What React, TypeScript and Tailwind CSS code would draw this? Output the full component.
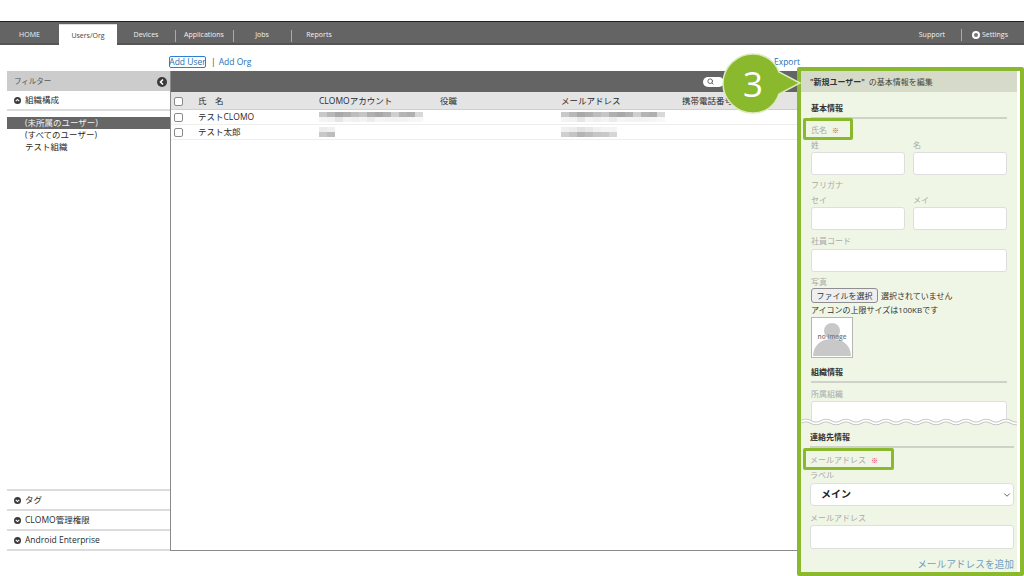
import { ChevronDown, Search } from 'lucide-react'

const font = { fontFamily: '"Open Sans", "Noto Sans CJK JP", sans-serif' }

const leftTabs = [
  { name: 'HOME', w: 'w-[59px]' },
  { name: 'Users/Org', w: 'w-[58px]', active: true },
  { name: 'Devices', w: 'w-[58px]' },
  { name: 'Applications', w: 'w-[58px]', sep: true },
  { name: 'Jobs', w: 'w-[58px]', sep: true },
  { name: 'Reports', w: 'w-[56px]', sep: true },
]

const columns = ['CLOMOアカウント', '役職', 'メールアドレス', '携帯電話番号']

// blurred-out personal data, one grey per mosaic cell
const mosaicLong = [
  ['#c9c9c9', '#b8b8b8', '#a9a9a9', '#b0b0b0', '#bdbdbd', '#c6c6c6', '#b0b0b0', '#a8a8a8', '#b2b2b2', '#cfcfcf', '#b5b5b5', '#b0b0b0', '#d8d8d8'],
  ['#f4f4f4', '#f2f2f2', '#e6e6e6', '#f4f4f4', '#f0f0f0', '#f4f4f4', '#ececec', '#f6f6f6', '#f4f4f4', '#f2f2f2', '#f4f4f4', '#f6f6f6', '#f8f8f8'],
]
const mosaicShort = [
  ['#ececec', '#f0f0f0'],
  ['#c8c8c8', '#bdbdbd'],
]
const mosaicMid = [
  ['#f0f0f0', '#ececec', '#e2e2e2', '#e8e8e8', '#f0f0f0', '#f4f4f4', '#f4f4f4'],
  ['#cfcfcf', '#c4c4c4', '#b4b4b4', '#bcbcbc', '#c6c6c6', '#c8c8c8', '#d6d6d6'],
]

function Arrow({ dir }: { dir: 'up' | 'down' | 'left' }) {
  const d = dir === 'up' ? 'M2.5 6 L5 3.5 L7.5 6' : dir === 'down' ? 'M2.5 4 L5 6.5 L7.5 4' : 'M6 2.5 L3.5 5 L6 7.5'
  return (
    <svg viewBox="0 0 10 10" className="w-full h-full">
      <circle cx="5" cy="5" r="5" fill="#3a3a3a" />
      <path d={d} fill="none" stroke="#fff" strokeWidth="1.6" />
    </svg>
  )
}

function Accordion({ label, dir }: { label: string; dir: 'up' | 'down' }) {
  return (
    <div className="h-[20px] flex items-center pl-[7px] gap-[4px] text-[8.5px] text-[#2a2a2a] bg-white border-b-2 border-[#dcdcdc]">
      <span className="w-[7px] h-[7px] flex">
        <Arrow dir={dir} />
      </span>
      {label}
    </div>
  )
}

function Mosaic({ rows }: { rows: string[][] }) {
  return (
    <div className="flex flex-col blur-[0.7px]">
      {rows.map((cells, i) => (
        <div key={i} className="flex h-[5px]">
          {cells.map((c, j) => (
            <div key={j} className="w-[8px] h-full" style={{ background: c }} />
          ))}
        </div>
      ))}
    </div>
  )
}

function Row({ name, a, b }: { name: string; a: string[][]; b: string[][] }) {
  return (
    <div className="h-[15px] grid grid-cols-[148px_121px_121px_121px_1fr] items-center border-b border-[#eeeeee] text-[8.5px] text-[#2a2a2a]">
      <div className="flex items-center">
        <span className="ml-[3px] w-[9px] h-[9px] border border-[#8a8a8a] rounded-[2px] bg-white" />
        <span className="ml-[15px]">{name}</span>
      </div>
      <Mosaic rows={a} />
      <div />
      <Mosaic rows={b} />
      <div />
    </div>
  )
}

function Label({ children }: { children: React.ReactNode }) {
  return <div className="text-[8px] leading-[12px] text-[#aaa]">{children}</div>
}

function Field({ className = '' }: { className?: string }) {
  return <div className={`h-[23px] bg-white border border-[#dedede] rounded-[3px] ${className}`} />
}

function Heading({ children }: { children: React.ReactNode }) {
  return <div className="text-[8px] leading-[12px] font-semibold text-[#333] border-b-2 border-[#cfd2c8] pb-[3px]">{children}</div>
}

function Required() {
  return <span className="ml-[5px] text-[7px] font-bold text-[#e8344a]">※</span>
}

function NameRow({ left, right }: { left: string; right: string }) {
  return (
    <div className="grid grid-cols-[94px_94px] gap-x-[8px]">
      <Label>{left}</Label>
      <Label>{right}</Label>
      <Field className="mt-[1px]" />
      <Field className="mt-[1px]" />
    </div>
  )
}

function Panel() {
  return (
    <div className="absolute left-[797px] top-[67px] w-[227px] h-[509px] border-4 border-[#8ab92d] rounded-[2px] bg-white pr-[3px]">
      <div className="h-full bg-[#eff6e5] relative overflow-hidden">
        <div className="h-[21px] bg-[#d5dbc8] flex items-center pl-[9px] text-[8px] text-[#444]">
          <b className="font-semibold text-[#333]">"新規ユーザー"</b>
          <span className="ml-[4px]">の基本情報を編集</span>
        </div>
        <div className="h-[329px] overflow-hidden pl-[10px] pr-[10px]">
          <div className="pt-[10px]">
            <Heading>基本情報</Heading>
          </div>
          <div className="mt-[5px]">
            <Label>
              氏名<Required />
            </Label>
          </div>
          <div className="mt-[2px]">
            <NameRow left="姓" right="名" />
          </div>
          <div className="mt-[4px]">
            <Label>フリガナ</Label>
          </div>
          <div className="mt-[3px]">
            <NameRow left="セイ" right="メイ" />
          </div>
          <div className="mt-[5px] w-[196px]">
            <Label>社員コード</Label>
            <Field className="mt-[2px]" />
          </div>
          <div className="mt-[4px]">
            <Label>写真</Label>
          </div>
          <div className="flex items-center text-[8px] text-[#333]">
            <span className="h-[15px] w-[67px] flex items-center justify-center bg-[#efefef] border border-[#8f8f8f] rounded-[3px]">ファイルを選択</span>
            <span className="ml-[3px]">選択されていません</span>
          </div>
          <div className="text-[8px] leading-[12px] text-[#333] mt-[1px]">アイコンの上限サイズは100KBです</div>
          <svg viewBox="0 0 42 41" className="w-[42px] h-[41px] mt-[1px]">
            <rect x="0.5" y="0.5" width="41" height="40" fill="#fff" stroke="#b5b5b5" />
            <circle cx="21" cy="14" r="8" fill="#c8c8c8" />
            <path d="M2 39 C3 26 12 22 21 22 C30 22 39 26 40 39 Z" fill="#c8c8c8" />
            <text x="21" y="22" textAnchor="middle" fontSize="6.5" fontWeight="600" fill="#777">no image</text>
          </svg>
          <div className="mt-[8px] w-[196px]">
            <Heading>組織情報</Heading>
          </div>
          <div className="mt-[5px]">
            <Label>所属組織</Label>
          </div>
          <div className="mt-[1px] w-[196px] h-[30px] bg-white border border-[#dedede] rounded-[3px]" />
        </div>

        {/* wavy cut between the two parts of the form */}
        <svg viewBox="0 0 220 8" className="absolute left-0 top-[347px] w-[220px] h-[8px]">
          <path
            d="M0 4 q5 -3 10 0 t10 0 t10 0 t10 0 t10 0 t10 0 t10 0 t10 0 t10 0 t10 0 t10 0 t10 0 t10 0 t10 0 t10 0 t10 0 t10 0 t10 0 t10 0 t10 0 t10 0 t10 0"
            fill="none"
            stroke="#b9b9b9"
            strokeWidth="3.4"
          />
          <path
            d="M0 4 q5 -3 10 0 t10 0 t10 0 t10 0 t10 0 t10 0 t10 0 t10 0 t10 0 t10 0 t10 0 t10 0 t10 0 t10 0 t10 0 t10 0 t10 0 t10 0 t10 0 t10 0 t10 0 t10 0"
            fill="none"
            stroke="#fff"
            strokeWidth="2"
          />
        </svg>

        <div className="pl-[9px] pr-[3px] pt-[10px]">
          <Heading>連絡先情報</Heading>
          <div className="mt-[6px] text-[8px] leading-[12px] text-[#aaa]">
            メールアドレス<Required />
          </div>
          <div className="mt-[2px]">
            <Label>ラベル</Label>
          </div>
          <div className="mt-[2px] h-[23px] bg-white border border-[#dedede] rounded-[4px] flex items-center justify-between pl-[10px] pr-[1px] text-[10px] font-semibold text-[#222]">
            メイン
            <ChevronDown size={10} strokeWidth={2} className="text-[#444]" />
          </div>
          <div className="mt-[6px]">
            <Label>メールアドレス</Label>
          </div>
          <Field className="mt-[1px] h-[24px]" />
          <div className="mt-[9px] text-right text-[9.7px] leading-[14px] text-[#6f9fc4]">メールアドレスを追加</div>
        </div>
      </div>
    </div>
  )
}

function Callout() {
  return (
    <div className="absolute left-[718px] top-[50px] w-[84px] h-[68px]">
      <svg viewBox="0 0 84 68" className="w-full h-full">
        <path
          d="M35 4 C47 4 57 11 61 22 L82 33 L61 44 C57 56 47 63 35 63 C19 63 5 50 5 33.5 C5 17 19 4 35 4 Z"
          fill="#8ab92d"
          stroke="#dcebbd"
          strokeWidth="1.5"
        />
      </svg>
      <div className="absolute left-[5px] top-[4px] w-[60px] h-[59px] flex items-center justify-center text-[35px] leading-none text-white" style={{ fontFamily: '"Open Sans", sans-serif' }}>
        3
      </div>
    </div>
  )
}

export default function App() {
  return (
    <div className="relative w-[1024px] h-[576px] overflow-hidden bg-white" style={font}>
      <div className="h-[21px]" />
      <div className="h-[24px] bg-[#646464] border-t border-[#1f1f1f] border-b-2 border-b-[#555] flex items-end text-[7px] text-[#f2f2f2]">
        {leftTabs.map((t) => (
          <div key={t.name} className={`${t.w} flex items-center justify-center relative ${t.active ? 'bg-white text-[#444] -mb-[2px] h-[21px] pt-[3px] border-t border-[#ddd]' : 'h-[19px] pt-[3px]'}`}>
            {t.sep && <span className="absolute left-0 top-[6px] h-[12px] w-px bg-[#aaa]" />}
            {t.name}
          </div>
        ))}
        <div className="flex-1" />
        <div className="h-[19px] pt-[3px] flex items-center pr-[16px]">
          <span className="mr-[16px]">Support</span>
          <span className="h-[12px] w-px bg-[#aaa] mr-[10px]" />
          <span className="w-[8px] h-[8px] rounded-full border-[2.5px] border-white bg-[#777] mr-[2px]" />
          <span>Settings</span>
        </div>
      </div>

      <div className="h-[26px] pt-[8px] pl-[169px] pr-[224px] flex items-center text-[8.5px] text-[#1f6fb2]">
        <span className="w-[37px] flex justify-center whitespace-nowrap border border-[#2f7fd6] rounded-[2px] leading-[10px] text-[#1f6fb2]">Add User</span>
        <span className="ml-[5px] mr-[3px] text-[#333]">|</span>
        <span>Add Org</span>
        <span className="ml-auto">Export</span>
      </div>

      <div className="ml-[7px] h-[480px] flex">
        <div className="w-[163px] flex flex-col">
          <div className="h-[20px] pt-[1px] bg-[#cccccc] flex items-center justify-between pl-[7px] pr-[3px] text-[7.5px] text-[#555]">
            フィルター
            <span className="w-[10px] h-[10px] flex">
              <Arrow dir="left" />
            </span>
          </div>
          <Accordion label="組織構成" dir="up" />
          <div className="flex-1 pt-[6px] text-[8.5px] leading-[12px] text-[#2a2a2a] border-b-2 border-[#dcdcdc]">
            <div className="bg-[#666] text-[#f2f2f2] pl-[18px]">(未所属のユーザー)</div>
            <div className="pl-[18px]">(すべてのユーザー)</div>
            <div className="pl-[18px]">テスト組織</div>
          </div>
          <Accordion label="タグ" dir="down" />
          <Accordion label="CLOMO管理権限" dir="down" />
          <Accordion label="Android Enterprise" dir="down" />
        </div>

        <div className="flex-1 border-l border-b border-[#8a8a8a]">
          <div className="h-[21px] bg-[#646464] flex items-center pl-[532px]">
            <span className="w-[21px] h-[10px] rounded-full bg-white flex items-center pl-[4px] text-[#555]">
              <Search size={7} strokeWidth={3} />
            </span>
          </div>
          <div className="h-[18px] pt-[1px] bg-[#e4e4e4] border-b border-[#cfcfcf] grid grid-cols-[148px_121px_121px_121px_1fr] items-center text-[8.5px] text-[#2a2a2a]">
            <div className="flex items-center">
              <span className="ml-[3px] w-[9px] h-[9px] border border-[#8a8a8a] rounded-[2px] bg-white" />
              <span className="ml-[15px]">氏　名</span>
            </div>
            {columns.map((c) => (
              <div key={c}>{c}</div>
            ))}
          </div>
          <Row name="テストCLOMO" a={mosaicLong} b={mosaicLong} />
          <Row name="テスト太郎" a={mosaicShort} b={mosaicMid} />
        </div>
      </div>

      <Panel />
      <div className="absolute left-[803px] top-[118px] w-[50px] h-[22px] border-[3px] border-[#8ab92d] rounded-[2px]" />
      <div className="absolute left-[803px] top-[448px] w-[91px] h-[22px] border-[3px] border-[#8ab92d] rounded-[2px]" />
      <Callout />
    </div>
  )
}
